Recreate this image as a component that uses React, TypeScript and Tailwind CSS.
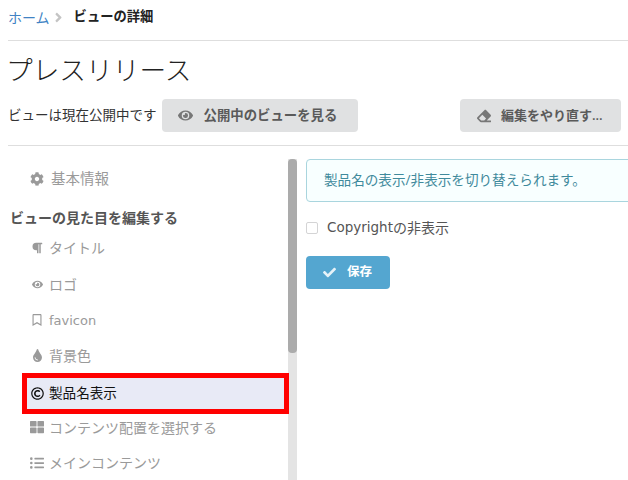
import React from "react";
import { FaEye, FaEraser, FaCog, FaParagraph, FaRegBookmark, FaTint, FaRegCopyright, FaThLarge, FaListUl, FaCheck, FaAngleRight } from "react-icons/fa";

const font = '"Open Sans","Noto Sans CJK JP",sans-serif';

function Item({ icon, label, h }: { icon: React.ReactNode; label: React.ReactNode; h: string }) {
  return (
    <div className={`flex items-center pl-[8px] text-[14px] whitespace-nowrap text-[#9a9a9a] ${h}`}>
      <span className="w-[14px] flex justify-center mr-[5px]">{icon}</span>
      <span>{label}</span>
    </div>
  );
}

export default function App() {
  return (
    <div className="w-[628px] h-[480px] overflow-hidden bg-white pl-[8px] text-[#444444]" style={{ fontFamily: font }}>
      <div className="h-[41px] border-b border-[#dedede] flex items-center pb-[6px]">
        <span className="text-[#4183c4] text-[14px]">ホーム</span>
        <FaAngleRight className="text-[#c4c4c4] ml-[1px] mr-[8px] text-[15px]" />
        <span className="font-semibold text-[#222222] text-[13.3px]">ビューの詳細</span>
      </div>
      <div className="h-[58px] flex items-center text-[26.7px] pt-[1px] -ml-[2px] font-light text-[#222222]">プレスリリース</div>
      <div className="flex items-center h-[33px] text-[14px]">
        <span className="mr-[5px] text-[#333333] text-[13.5px]">ビューは現在公開中です</span>
        <div className="h-[33px] w-[196px] rounded-[4px] bg-[#e0e1e2] flex items-center text-[#5a5a5a] font-semibold text-[13.4px] pl-[16px]">
          <FaEye className="text-[15px] mr-[11px] text-[#777777]" />
          <span>公開中のビューを見る</span>
        </div>
        <div className="ml-auto mr-[7px] h-[33px] w-[161px] rounded-[4px] bg-[#e0e1e2] flex items-center text-[#5a5a5a] font-semibold text-[13px] pl-[17px]">
          <FaEraser className="text-[14px] mr-[10px] text-[#777777]" />
          <span>編集をやり直す...</span>
        </div>
      </div>
      <div className="mt-[13px] border-b border-[#dedede]" />
      <div className="flex mt-[13px]">
        <div className="w-[289px] shrink-0 relative h-[321px] overflow-hidden">
          <div className="absolute left-[280px] top-0 bottom-0 w-[9px] bg-[#e4e4e4]">
            <div className="h-[194px] rounded-[4px] bg-[#ababab]" />
          </div>
          <div className="pl-[14px]">
            <Item h="h-[40px]" icon={<FaCog className="text-[14px]" />} label={<span className="text-[14.5px] ml-[2px]">基本情報</span>} />
          </div>
          <div className="font-semibold text-[14px] text-[#555555] h-[21px] mt-[8px] flex items-center pl-[2px]">ビューの見た目を編集する</div>
          <div className="pl-[14px]">
            <Item h="h-[39px]" icon={<FaParagraph className="text-[12px]" />} label="タイトル" />
            <Item h="h-[35px]" icon={<FaEye className="text-[11px]" />} label="ロゴ" />
            <Item h="h-[35px]" icon={<FaRegBookmark className="text-[12px]" />} label={<span style={{ fontFamily: '"DejaVu Sans",sans-serif' }} className="text-[13px]">favicon</span>} />
            <Item h="h-[36px]" icon={<FaTint className="text-[13px]" />} label="背景色" />
          </div>
          <div className="relative ml-[14px] w-[267px] h-[41px] border-[5px] border-[#ff0000] bg-[#e8eaf6] flex items-center text-[13.6px] text-[#111111] pl-[3px]">
            <span className="w-[14px] flex justify-center mr-[5px]"><FaRegCopyright className="text-[13px]" /></span>
            <span>製品名表示</span>
          </div>
          <div className="pl-[14px]">
            <Item h="h-[26px]" icon={<FaThLarge className="text-[14px]" />} label="コンテンツ配置を選択する" />
            <Item h="h-[45px]" icon={<FaListUl className="text-[14px]" />} label="メインコンテンツ" />
          </div>
        </div>
        <div className="ml-[9px] w-[400px] shrink-0">
          <div className="h-[43px] rounded-[4px] border border-[#a9d5de] bg-[#f8ffff] flex items-center pl-[17px] text-[13.6px] text-[#3f8a9c]">
            製品名の表示/非表示を切り替えられます。
          </div>
          <div className="mt-[18px] flex items-center h-[15px] text-[13.5px] text-[#555555]">
            <span className="w-[12px] h-[12px] rounded-[2px] border border-[#d4d4d5] bg-white mr-[9px]" />
            <span style={{ fontFamily: '"DejaVu Sans",sans-serif' }}>Copyright</span>
            <span className="text-[14px]">の非表示</span>
          </div>
          <div className="mt-[21px] w-[84px] h-[33px] rounded-[4px] bg-[#54a6d0] flex items-center text-white font-bold text-[12.5px] pl-[17px]">
            <FaCheck className="text-[13px] mr-[11px] text-[#e6f2f8]" />
            <span>保存</span>
          </div>
        </div>
      </div>
    </div>
  );
}
